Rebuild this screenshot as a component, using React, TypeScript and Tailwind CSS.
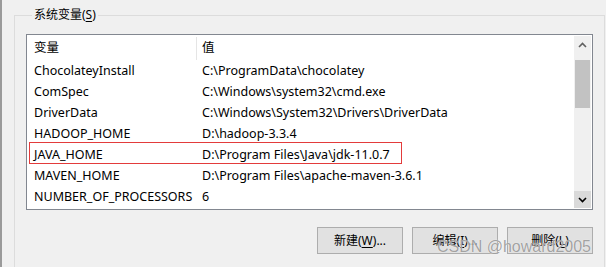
const FONT = { fontFamily: '"Noto Sans", "Noto Sans CJK SC", sans-serif' };

const vars: [string, string][] = [
  ["ChocolateyInstall", "C:\\ProgramData\\chocolatey"],
  ["ComSpec", "C:\\Windows\\system32\\cmd.exe"],
  ["DriverData", "C:\\Windows\\System32\\Drivers\\DriverData"],
  ["HADOOP_HOME", "D:\\hadoop-3.3.4"],
  ["JAVA_HOME", "D:\\Program Files\\Java\\jdk-11.0.7"],
  ["MAVEN_HOME", "D:\\Program Files\\apache-maven-3.6.1"],
  ["NUMBER_OF_PROCESSORS", "6"],
];

// Windows style push button
const WinButton = ({ label, hot, rest }: { label: string; hot: string; rest: string }) => (
  <button className="flex h-[27px] w-[86px] items-center justify-center border border-[#adadad] bg-[#e1e1e1] text-[12px] text-black">
    {label}(<span className="underline underline-offset-2">{hot}</span>){rest}
  </button>
);

const Chevron = ({ up, color }: { up?: boolean; color: string }) => (
  <svg width="9" height="6" viewBox="0 0 9 6">
    <polyline
      points={up ? "1,5 4.5,1.5 8,5" : "1,1 4.5,4.5 8,1"}
      fill="none"
      stroke={color}
      strokeWidth="1.6"
    />
  </svg>
);

export default function App() {
  return (
    <div
      className="relative h-[267px] w-[606px] overflow-hidden border-l-2 border-[#9a9a9a] bg-[#f0f0f0] pl-[12px] pt-[7px] text-[12px] text-black"
      style={FONT}
    >
      <fieldset className="w-[591px] border border-b-0 border-[#dcdcdc] pl-[11px] pb-[40px]">
        <legend className="ml-[6px] px-[2px] leading-[16px]">
          系统变量(<span className="underline underline-offset-2">S</span>)
        </legend>

        {/* 变量列表 */}
        <div className="mt-[11px] flex h-[176px] w-[567px] border border-[#828790] bg-white text-[12.5px]">
          <div className="flex flex-1 flex-col">
            <div className="flex h-[25px] items-center pt-[2px]">
              <div className="w-[169px] pl-[7px]">变量</div>
              <div className="flex h-full items-center border-l border-[#e5e5e5] pl-[5px]">值</div>
            </div>
            {vars.map(([name, value]) => (
              <div key={name} className="relative flex h-[21px] items-center pt-[2px]">
                <div className="w-[169px] whitespace-nowrap pl-[7px]">{name}</div>
                <div className="whitespace-nowrap pl-[6px]">{value}</div>
                {name === "JAVA_HOME" && (
                  <span className="absolute left-[2px] top-[-2px] h-[22px] w-[373px] border border-[#e33b3b]" />
                )}
              </div>
            ))}
          </div>

          {/* 滚动条 */}
          <div className="my-[1px] mr-[1px] flex w-[17px] flex-col bg-[#f0f0f0]">
            <div className="flex h-[17px] items-center justify-center">
              <Chevron up color="#606060" />
            </div>
            <div className="mx-[1px] mt-[7px] h-[48px] bg-[#c2c2c2]" />
            <div className="flex-1" />
            <div className="flex h-[17px] items-center justify-center bg-[#dadada]">
              <Chevron color="#000000" />
            </div>
          </div>
        </div>

        <div className="mt-[17px] flex w-[567px] justify-end gap-[9px]">
          <WinButton label="新建" hot="W" rest="..." />
          <WinButton label="编辑" hot="I" rest="..." />
          <WinButton label="删除" hot="L" rest="" />
        </div>
      </fieldset>

      <span
        className="absolute bottom-[8px] right-[15px] text-[16px] text-[#8a8a8a]/80 [text-shadow:0_0_1px_#ffffff]"
        style={{ fontFamily: '"Liberation Sans", sans-serif' }}
      >
        CSDN @howard2005
      </span>
    </div>
  );
}
